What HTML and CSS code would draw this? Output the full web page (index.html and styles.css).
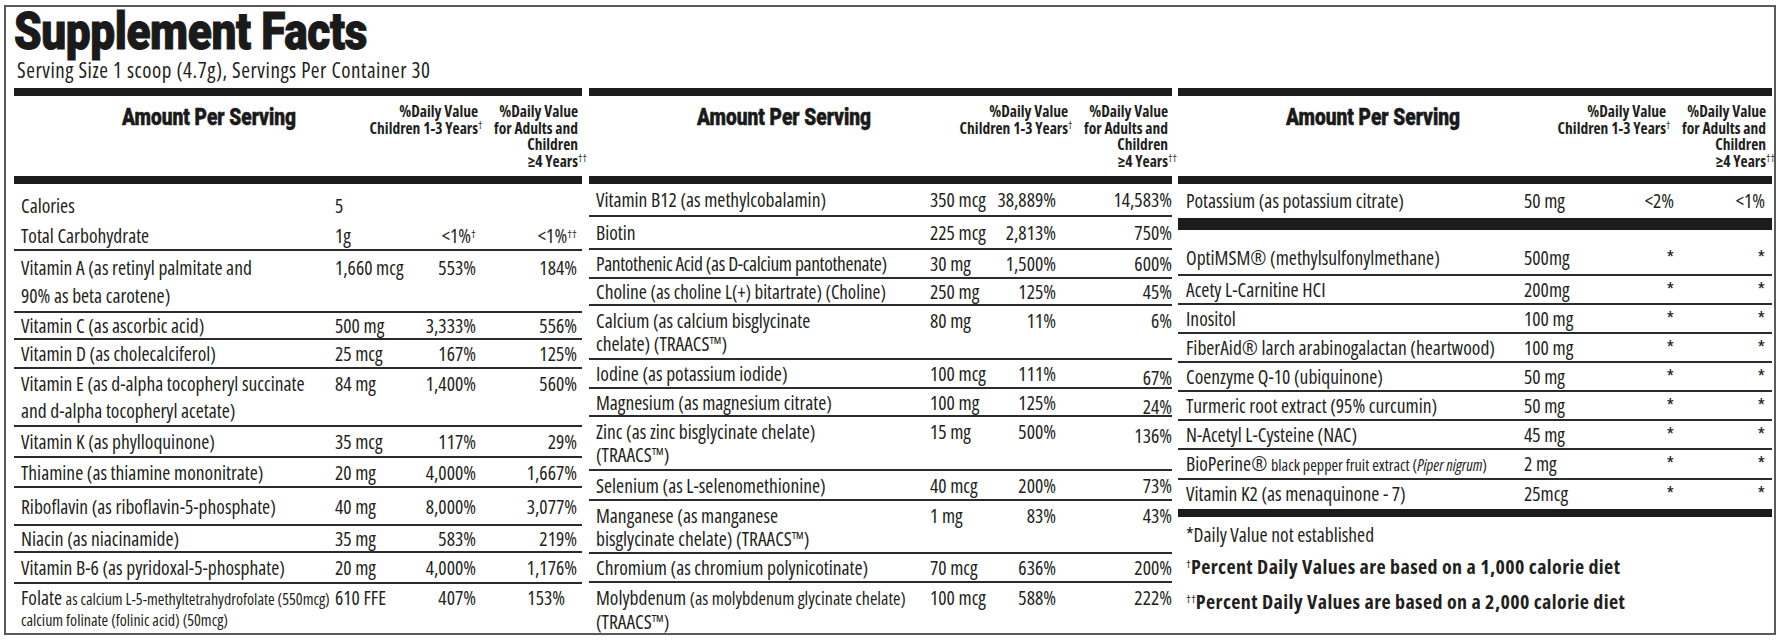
FILE: index.html
```html
<!DOCTYPE html>
<html lang="en">
<head>
<meta charset="utf-8">
<title>Supplement Facts</title>
<link rel="stylesheet" href="styles.css">
</head>
<body>
<div class="label">
  <h1 class="title"><span class="title-text">Supplement Facts</span></h1>
  <p class="serving">Serving Size 1 scoop (4.7g), Servings Per Container 30</p>
  <div class="cols">

    <section class="col c1">
      <div class="bar"></div>
      <div class="head">
        <div class="head-title"><span class="heavy">Amount Per Serving</span></div>
        <div class="head-dv1">%Daily Value<br>Children 1-3 Years<sup class="dg">†</sup></div>
        <div class="head-dv2">%Daily Value<br>for Adults and<br>Children<br>≥4 Years<sup class="dg">††</sup></div>
      </div>
      <div class="bar"></div>
      <div class="rows">
        <div class="row first cal"><span class="nm">Calories</span><span class="amt">5</span><span class="dv"></span><span class="dv"></span></div>
        <div class="row nb"><span class="nm">Total Carbohydrate</span><span class="amt">1g</span><span class="dv">&lt;1%<sup class="sp">†</sup></span><span class="dv">&lt;1%<sup class="sp">††</sup></span></div>
        <div class="row d62"><span class="nm">Vitamin A (as retinyl palmitate and<br>90% as beta carotene)</span><span class="amt">1,660 mcg</span><span class="dv">553%</span><span class="dv">184%</span></div>
        <div class="row r27"><span class="nm">Vitamin C (as ascorbic acid)</span><span class="amt">500 mg</span><span class="dv">3,333%</span><span class="dv">556%</span></div>
        <div class="row"><span class="nm">Vitamin D (as cholecalciferol)</span><span class="amt">25 mcg</span><span class="dv">167%</span><span class="dv">125%</span></div>
        <div class="row d58"><span class="nm">Vitamin E (as d-alpha tocopheryl succinate<br>and d-alpha tocopheryl acetate)</span><span class="amt">84 mg</span><span class="dv">1,400%</span><span class="dv">560%</span></div>
        <div class="row r31"><span class="nm">Vitamin K (as phylloquinone)</span><span class="amt">35 mcg</span><span class="dv">117%</span><span class="dv">29%</span></div>
        <div class="row r30"><span class="nm">Thiamine (as thiamine mononitrate)</span><span class="amt">20 mg</span><span class="dv">4,000%</span><span class="dv">1,667%</span></div>
        <div class="row r38"><span class="nm">Riboflavin (as riboflavin-5-phosphate)</span><span class="amt">40 mg</span><span class="dv">8,000%</span><span class="dv">3,077%</span></div>
        <div class="row r27"><span class="nm">Niacin (as niacinamide)</span><span class="amt">35 mg</span><span class="dv">583%</span><span class="dv">219%</span></div>
        <div class="row r31"><span class="nm">Vitamin B-6 (as pyridoxal-5-phosphate)</span><span class="amt">20 mg</span><span class="dv">4,000%</span><span class="dv">1,176%</span></div>
        <div class="row last"><span class="nm">Folate <span class="sm">as calcium L-5-methyltetrahydrofolate (550mcg)</span><span class="sm blk">calcium folinate (folinic acid) (50mcg)</span></span><span class="amt">610 FFE</span><span class="dv">407%</span><span class="dv inset">153%</span></div>
      </div>
    </section>

    <section class="col c2">
      <div class="bar"></div>
      <div class="head">
        <div class="head-title"><span class="heavy">Amount Per Serving</span></div>
        <div class="head-dv1">%Daily Value<br>Children 1-3 Years<sup class="dg">†</sup></div>
        <div class="head-dv2">%Daily Value<br>for Adults and<br>Children<br>≥4 Years<sup class="dg">††</sup></div>
      </div>
      <div class="bar"></div>
      <div class="rows">
        <div class="row first r33"><span class="nm">Vitamin B12 (as methylcobalamin)</span><span class="amt">350 mcg</span><span class="dv">38,889%</span><span class="dv">14,583%</span></div>
        <div class="row r33"><span class="nm">Biotin</span><span class="amt">225 mcg</span><span class="dv">2,813%</span><span class="dv">750%</span></div>
        <div class="row"><span class="nm tight">Pantothenic Acid (as D-calcium pantothenate)</span><span class="amt">30 mg</span><span class="dv">1,500%</span><span class="dv">600%</span></div>
        <div class="row r27"><span class="nm">Choline <span class="md2">(as choline L(+) bitartrate) (Choline)</span></span><span class="amt">250 mg</span><span class="dv">125%</span><span class="dv">45%</span></div>
        <div class="row d54"><span class="nm">Calcium (as calcium bisglycinate<br>chelate) (TRAACS™)</span><span class="amt">80 mg</span><span class="dv">11%</span><span class="dv">6%</span></div>
        <div class="row"><span class="nm">Iodine (as potassium iodide)</span><span class="amt">100 mcg</span><span class="dv">111%</span><span class="dv low">67%</span></div>
        <div class="row r28"><span class="nm">Magnesium (as magnesium citrate)</span><span class="amt">100 mg</span><span class="dv">125%</span><span class="dv low">24%</span></div>
        <div class="row d54"><span class="nm">Zinc (as zinc bisglycinate chelate)<br>(TRAACS™)</span><span class="amt">15 mg</span><span class="dv">500%</span><span class="dv low">136%</span></div>
        <div class="row r30"><span class="nm">Selenium (as L-selenomethionine)</span><span class="amt">40 mcg</span><span class="dv">200%</span><span class="dv">73%</span></div>
        <div class="row d53"><span class="nm">Manganese (as manganese<br>bisglycinate chelate) (TRAACS™)</span><span class="amt">1 mg</span><span class="dv">83%</span><span class="dv">43%</span></div>
        <div class="row"><span class="nm">Chromium (as chromium polynicotinate)</span><span class="amt">70 mcg</span><span class="dv">636%</span><span class="dv">200%</span></div>
        <div class="row last d53"><span class="nm">Molybdenum <span class="md">(as molybdenum glycinate chelate)</span><br>(TRAACS™)</span><span class="amt">100 mcg</span><span class="dv">588%</span><span class="dv">222%</span></div>
      </div>
    </section>

    <section class="col c3">
      <div class="bar"></div>
      <div class="head">
        <div class="head-title"><span class="heavy">Amount Per Serving</span></div>
        <div class="head-dv1">%Daily Value<br>Children 1-3 Years<sup class="dg">†</sup></div>
        <div class="head-dv2">%Daily Value<br>for Adults and<br>Children<br>≥4 Years<sup class="dg">††</sup></div>
      </div>
      <div class="bar"></div>
      <div class="rows">
        <div class="row first pot"><span class="nm">Potassium (as potassium citrate)</span><span class="amt">50 mg</span><span class="dv">&lt;2%</span><span class="dv">&lt;1%</span></div>
        <div class="bar thick"></div>
        <div class="row first opti"><span class="nm">OptiMSM® (methylsulfonylmethane)</span><span class="amt">500mg</span><span class="dv">*</span><span class="dv">*</span></div>
        <div class="row"><span class="nm">Acety L-Carnitine HCI</span><span class="amt">200mg</span><span class="dv">*</span><span class="dv">*</span></div>
        <div class="row"><span class="nm">Inositol</span><span class="amt">100 mg</span><span class="dv">*</span><span class="dv">*</span></div>
        <div class="row"><span class="nm">FiberAid® larch arabinogalactan (heartwood)</span><span class="amt">100 mg</span><span class="dv">*</span><span class="dv">*</span></div>
        <div class="row"><span class="nm">Coenzyme Q-10 (ubiquinone)</span><span class="amt">50 mg</span><span class="dv">*</span><span class="dv">*</span></div>
        <div class="row"><span class="nm">Turmeric root extract (95% curcumin)</span><span class="amt">50 mg</span><span class="dv">*</span><span class="dv">*</span></div>
        <div class="row"><span class="nm">N-Acetyl L-Cysteine (NAC)</span><span class="amt">45 mg</span><span class="dv">*</span><span class="dv">*</span></div>
        <div class="row"><span class="nm">BioPerine® <span class="sm">black pepper fruit extract (<i>Piper nigrum</i>)</span></span><span class="amt">2 mg</span><span class="dv">*</span><span class="dv">*</span></div>
        <div class="row"><span class="nm">Vitamin K2 (as menaquinone - 7)</span><span class="amt">25mcg</span><span class="dv">*</span><span class="dv">*</span></div>
        <div class="bar foot-bar"></div>
        <div class="notes">
          <p class="note">*Daily Value not established</p>
          <p class="note bold"><sup class="fd">†</sup>Percent Daily Values are based on a 1,000 calorie diet</p>
          <p class="note bold n3"><sup class="fd">††</sup>Percent Daily Values are based on a 2,000 calorie diet</p>
        </div>
      </div>
    </section>

  </div>
</div>
</body>
</html>
```

FILE: styles.css
```css
* {
  box-sizing: border-box;
}

html, body {
  margin: 0;
  padding: 0;
  background: #ffffff;
}

body {
  font-family: "Open Sans", "Noto Sans", sans-serif;
  font-stretch: 75%;
  font-size: 19.5px;
  color: #231f20;
}

.label {
  width: 1772px;
  height: 630px;
  margin: 5px 0 0 4px;
  border: 2px solid #5a5a5a;
  padding: 0 2px 0 8px;
  display: flex;
  flex-direction: column;
}

.title {
  margin: 4px 0 0 0;
  height: 48px;
  line-height: 42px;
  font-family: "Roboto", "Lato", "Inter", sans-serif;
  font-stretch: 100%;
  font-weight: 900;
  font-size: 52px;
  white-space: nowrap;
  color: #1a1a1a;
}

.title-text {
  display: inline-block;
  transform: scaleX(0.85);
  transform-origin: left center;
  letter-spacing: -0.5px;
  -webkit-text-stroke: 1px #1a1a1a;
}

.serving {
  margin: 0 0 0 3px;
  font-size: 21px;
  letter-spacing: 0.55px;
  line-height: 22px;
  height: 22px;
  white-space: nowrap;
}

.cols {
  flex: 1;
  min-height: 0;
  margin-top: 7px;
  display: flex;
}

.col {
  display: flex;
  flex-direction: column;
  min-height: 0;
}

.c1 {
  width: 568px;
  --pl: 7px;
  --pr: 5px;
  --cols: 314px 74px 67px 1fr;
}

.c2 {
  width: 583px;
  margin-left: 7px;
  --pl: 7px;
  --pr: 0px;
  --cols: 334px 59px 67px 1fr;
}

.c3 {
  width: 594px;
  margin-left: 6px;
  --pl: 8px;
  --pr: 7px;
  --cols: 338px 74px 76px 1fr;
}

.bar {
  height: 8px;
  background: #1c1c1c;
  flex: none;
}

.bar.thick {
  height: 12px;
}

.bar.foot-bar {
  height: 8px;
  margin-top: 2px;
}

.head {
  height: 80px;
  flex: none;
  display: flex;
  align-items: flex-start;
}

.head-title {
  flex: 1;
  padding: 12px 0 0 108px;
  line-height: 20px;
}

.heavy {
  display: inline-block;
  font-family: "Roboto", "Lato", "Inter", sans-serif;
  font-stretch: 100%;
  font-weight: 900;
  font-size: 23px;
  color: #1a1a1a;
  white-space: nowrap;
  transform: scaleX(0.83);
  transform-origin: left center;
  -webkit-text-stroke: 0.5px #1a1a1a;
}

.head-dv1,
.head-dv2 {
  padding-top: 7px;
  font-weight: 700;
  font-size: 15.5px;
  line-height: 16.5px;
  text-align: right;
  white-space: nowrap;
}

.head-dv1 {
  margin-right: 11px;
}

.head-dv2 {
  width: 89px;
  margin-right: 4px;
}

.c3 .head-dv2 {
  margin-right: 6px;
}

.dg {
  display: inline-block;
  width: 0;
  font-size: 10px;
  font-weight: 400;
  line-height: 0;
  vertical-align: 5px;
  text-align: left;
}

.rows {
  flex: 1;
  min-height: 0;
  display: flex;
  flex-direction: column;
}

.row {
  flex: none;
  display: grid;
  grid-template-columns: var(--cols);
  padding: 2px var(--pr) 1px var(--pl);
  line-height: 24px;
  border-top: 2px solid #2b2b2b;
}

.row.first,
.row.nb {
  border-top: none;
}

.row.cal {
  padding-top: 10px;
  padding-bottom: 4px;
}

.row.r27 { padding-top: 1px; padding-bottom: 0; }
.row.r28 { padding-top: 2px; padding-bottom: 0; }
.row.r30 { padding-top: 3px; padding-bottom: 1px; }
.row.r31 { padding-top: 3px; padding-bottom: 2px; }
.row.r33 { padding-top: 4px; padding-bottom: 3px; }
.row.r38 { padding-top: 7px; padding-bottom: 5px; }

.row.d62 { line-height: 28px; padding-top: 3px; padding-bottom: 1px; }
.row.d58 { line-height: 27px; padding-top: 1px; padding-bottom: 1px; }
.row.d54 { line-height: 23px; padding-top: 3px; padding-bottom: 3px; }
.row.d53 { line-height: 23px; padding-top: 3px; padding-bottom: 2px; }

.row.pot {
  padding-top: 5px;
  padding-bottom: 5px;
}

.row.opti {
  padding-top: 16px;
  padding-bottom: 4px;
}

.row.last {
  flex: 1;
}

.nm,
.amt {
  white-space: nowrap;
}

.nm.tight {
  letter-spacing: -0.35px;
}

.dv {
  text-align: right;
  white-space: nowrap;
}

.dv.inset {
  padding-right: 12px;
}

.dv.low {
  padding-top: 4px;
  margin-bottom: -4px;
}

.sp {
  font-size: 11px;
  line-height: 0;
  vertical-align: 5px;
}

.sm {
  font-size: 16px;
}

.sm.blk {
  display: block;
  line-height: 18px;
}

.md {
  font-size: 18px;
}

.md2 {
  font-size: 19px;
}

.notes {
  padding: 6px 0 0 8px;
}

.note {
  margin: 0;
  line-height: 24px;
  white-space: nowrap;
}

.note.bold {
  margin-top: 8px;
  font-weight: 700;
  font-size: 20px;
  letter-spacing: 0.4px;
}

.note.n3 {
  margin-top: 11px;
}

.fd {
  font-size: 11px;
  font-weight: 400;
  letter-spacing: 0;
  line-height: 0;
  vertical-align: 6px;
}
```
